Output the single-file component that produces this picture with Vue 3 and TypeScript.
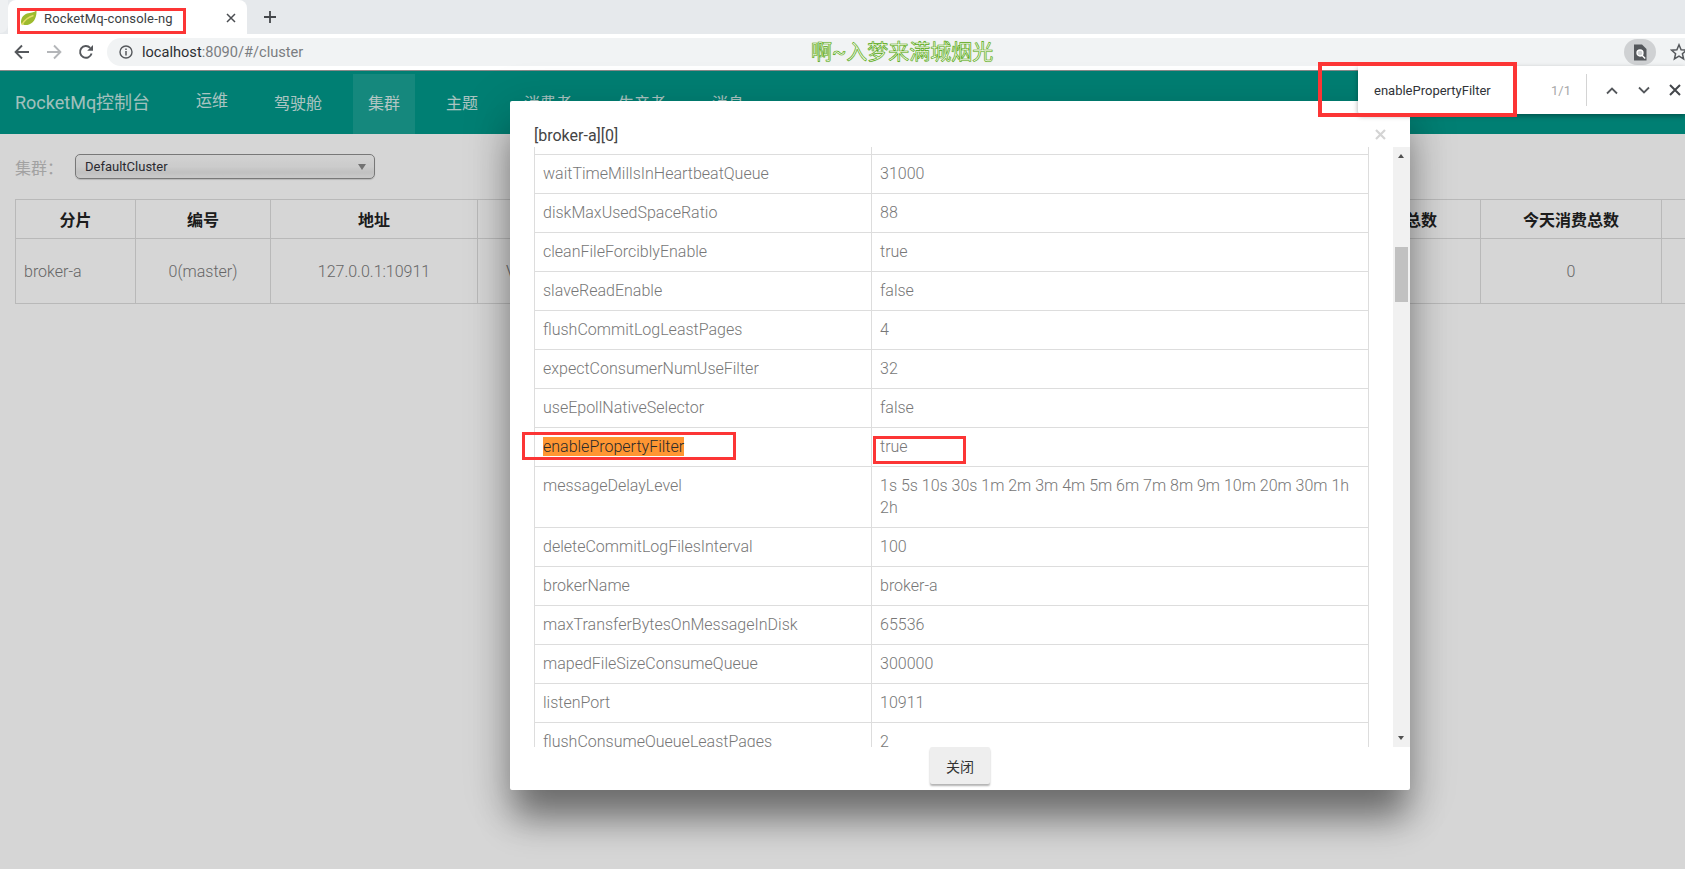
<template>
  <div class="screen">
    <div class="tab-strip">
      <div class="prev-tab"></div>
      <div class="tab">
        <svg class="leaf" width="18" height="16" viewBox="0 0 18 16">
          <path d="M16.5 0.5C16.8 6 14.8 12.5 9 14.5C6 15.5 3 15 1.2 13.5C0.4 9.5 2.5 5 7 3.5C10.5 2.4 14 2.8 16.5 0.5Z" fill="#9dbb2e" />
          <path d="M1.8 14.8C4.5 10 8.5 7 13.5 5.5" fill="none" stroke="#e4dc66" stroke-width="1.4" />
        </svg>
        <span class="tab-title">RocketMq-console-ng</span>
        <svg class="tab-close" width="10" height="10" viewBox="0 0 10 10">
          <path d="M1 1L9 9M9 1L1 9" stroke="#4a4d51" stroke-width="1.5" />
        </svg>
        <span class="mark tab-mark"></span>
      </div>
      <svg class="new-tab" width="12" height="12" viewBox="0 0 12 12">
        <path d="M6 0V12M0 6H12" stroke="#44474b" stroke-width="1.8" />
      </svg>
    </div>

    <div class="toolbar">
      <svg class="tool" width="16" height="16" viewBox="0 0 16 16">
        <path d="M15 8H2M8 1.5L1.6 8L8 14.5" fill="none" stroke="#55585c" stroke-width="1.9" />
      </svg>
      <svg class="tool" width="16" height="16" viewBox="0 0 16 16">
        <path d="M1 8H14M8 1.5L14.4 8L8 14.5" fill="none" stroke="#b4b6b9" stroke-width="1.9" />
      </svg>
      <svg class="tool" width="16" height="16" viewBox="0 0 16 16">
        <path d="M13.6 9.6A5.9 5.9 0 1 1 12.2 3.8" fill="none" stroke="#55585c" stroke-width="1.9" />
        <path d="M15 1V6.8H9.2Z" fill="#55585c" />
      </svg>
      <div class="omnibox">
        <svg width="14" height="14" viewBox="0 0 14 14">
          <circle cx="7" cy="7" r="6" fill="none" stroke="#55585c" stroke-width="1.4" />
          <path d="M7 6V10.4M7 3.4V5" stroke="#55585c" stroke-width="1.5" />
        </svg>
        <span class="url"><span class="host">localhost</span>:8090/#/cluster</span>
        <span class="badge">
          <svg width="14" height="17" viewBox="0 0 14 17">
            <path d="M1 0.5H9L13.5 5V16.5H1Z" fill="#55585c" />
            <circle cx="7" cy="9" r="3" fill="#cfd1d3" stroke="#fff" stroke-width="1.3" />
            <path d="M9 11.2L12.2 14.4" stroke="#fff" stroke-width="1.4" />
          </svg>
        </span>
        <svg class="star" width="18" height="18" viewBox="0 0 18 18">
          <path d="M9 1.8L11.1 6.7L16.4 7.2L12.4 10.7L13.6 15.9L9 13.2L4.4 15.9L5.6 10.7L1.6 7.2L6.9 6.7Z" fill="none" stroke="#55585c" stroke-width="1.5" />
        </svg>
      </div>
      <span class="watermark">啊~入梦来满城烟光</span>
    </div>

    <div class="page">
      <nav class="navbar">
        <span class="brand">RocketMq控制台</span>
        <a
          v-for="item in navItems"
          :key="item"
          class="nav-item"
          :class="{ active: item === '集群', raised: item === '运维' }"
        >{{ item }}</a>
      </nav>

      <div class="content">
        <div class="filter">
          <span class="filter-label">集群：</span>
          <div class="select">
            <span>DefaultCluster</span>
            <i class="select-arrow"></i>
          </div>
        </div>
        <table class="cluster-table">
          <colgroup>
            <col v-for="col in clusterCols" :key="col.title" :style="{ width: col.width + 'px' }" />
          </colgroup>
          <thead>
            <tr><th v-for="col in clusterCols" :key="col.title">{{ col.title }}</th></tr>
          </thead>
          <tbody>
            <tr>
              <td v-for="(col, i) in clusterCols" :key="col.title" :class="{ left: i === 0 }">{{ col.value }}</td>
            </tr>
          </tbody>
        </table>
      </div>

      <div class="overlay">
        <div class="modal">
          <div class="modal-head">
            <span class="modal-title">[broker-a][0]</span>
            <svg class="modal-close" width="11" height="11" viewBox="0 0 11 11">
              <path d="M1 1L10 10M10 1L1 10" stroke="#d4d4d4" stroke-width="2.2" />
            </svg>
          </div>
          <div class="modal-body">
            <div class="table-scroll">
              <table class="detail-table">
                <colgroup>
                  <col class="key-col" />
                  <col />
                </colgroup>
                <tbody>
                  <tr class="cut-row"><td></td><td></td></tr>
                  <tr v-for="row in brokerConfig" :key="row.key">
                    <td>
                      <template v-if="row.key === 'enablePropertyFilter'">
                        <span class="hit">{{ row.key }}</span>
                        <span class="mark key-mark"></span>
                      </template>
                      <template v-else>{{ row.key }}</template>
                    </td>
                    <td>
                      {{ row.value }}
                      <span v-if="row.key === 'enablePropertyFilter'" class="mark val-mark"></span>
                    </td>
                  </tr>
                </tbody>
              </table>
            </div>
            <div class="scrollbar">
              <i class="arrow-up"></i>
              <i class="thumb"></i>
              <i class="arrow-down"></i>
            </div>
          </div>
          <div class="modal-foot">
            <button class="close-btn">关闭</button>
          </div>
        </div>
      </div>
    </div>

    <div class="findbar">
      <span class="find-text">enablePropertyFilter</span>
      <span class="find-count">1/1</span>
      <span class="find-sep"></span>
      <svg width="14" height="9" viewBox="0 0 14 9">
        <path d="M2 7.5L7 2.5L12 7.5" fill="none" stroke="#55585c" stroke-width="1.8" />
      </svg>
      <svg width="14" height="9" viewBox="0 0 14 9">
        <path d="M2 1.5L7 6.5L12 1.5" fill="none" stroke="#55585c" stroke-width="1.8" />
      </svg>
      <svg width="12" height="12" viewBox="0 0 12 12">
        <path d="M1 1L11 11M11 1L1 11" stroke="#44474b" stroke-width="2" />
      </svg>
    </div>
    <span class="mark find-mark"></span>
  </div>
</template>

<script setup lang="ts">
  const navItems: string[] = ["运维", "驾驶舱", "集群", "主题", "消费者", "生产者", "消息"];

  const clusterCols = [
    { title: "分片", width: 120, value: "broker-a" },
    { title: "编号", width: 135, value: "0(master)" },
    { title: "地址", width: 207, value: "127.0.0.1:10911" },
    { title: "版本", width: 196, value: "V4_3_0_SNAPSHOT" },
    { title: "生产消息TPS", width: 122, value: "0.00" },
    { title: "消费消息TPS", width: 122, value: "0.00" },
    { title: "昨日生产总数", width: 190, value: "0" },
    { title: "昨日消费总数", width: 190, value: "0" },
    { title: "今天生产总数", width: 183, value: "0" },
    { title: "今天消费总数", width: 181, value: "0" },
    { title: "操作", width: 200, value: "" },
  ];

  const brokerConfig: { key: string; value: string }[] = [
    { key: "waitTimeMillsInHeartbeatQueue", value: "31000" },
    { key: "diskMaxUsedSpaceRatio", value: "88" },
    { key: "cleanFileForciblyEnable", value: "true" },
    { key: "slaveReadEnable", value: "false" },
    { key: "flushCommitLogLeastPages", value: "4" },
    { key: "expectConsumerNumUseFilter", value: "32" },
    { key: "useEpollNativeSelector", value: "false" },
    { key: "enablePropertyFilter", value: "true" },
    { key: "messageDelayLevel", value: "1s 5s 10s 30s 1m 2m 3m 4m 5m 6m 7m 8m 9m 10m 20m 30m 1h 2h" },
    { key: "deleteCommitLogFilesInterval", value: "100" },
    { key: "brokerName", value: "broker-a" },
    { key: "maxTransferBytesOnMessageInDisk", value: "65536" },
    { key: "mapedFileSizeConsumeQueue", value: "300000" },
    { key: "listenPort", value: "10911" },
    { key: "flushConsumeQueueLeastPages", value: "2" },
  ];
</script>

<style scoped>
  .screen {
    position: relative;
    width: 1685px;
    height: 869px;
    overflow: hidden;
    display: flex;
    flex-direction: column;
    background: #fff;
    font-family: Roboto, "Noto Sans CJK SC", sans-serif;
  }

  /* browser chrome */
  .tab-strip {
    height: 34px;
    flex: none;
    display: flex;
    align-items: flex-start;
    background: #e6e9ec;
  }

  .prev-tab {
    width: 8px;
    height: 33px;
    background: #eef0f2;
    border-radius: 0 0 8px 0;
  }

  .tab {
    position: relative;
    width: 239px;
    height: 34px;
    display: flex;
    align-items: center;
    background: #fff;
    border-radius: 8px 8px 0 0;
    padding: 2px 0 0 12px;
    box-sizing: border-box;
  }

  .leaf {
    flex: none;
  }

  .tab-title {
    margin-left: 6px;
    font-size: 13px;
    letter-spacing: 0.15px;
    color: #3c4043;
    white-space: nowrap;
  }

  .tab-close {
    margin-left: 53px;
  }

  .new-tab {
    margin: 11px 0 0 17px;
  }

  .mark {
    position: absolute;
    box-sizing: border-box;
    border: 3px solid #fc3535;
    pointer-events: none;
  }

  .tab-mark {
    left: 9px;
    top: 8px;
    width: 169px;
    height: 26px;
  }

  .toolbar {
    position: relative;
    height: 36px;
    flex: none;
    display: flex;
    align-items: center;
    padding-left: 14px;
    background: #fff;
    box-sizing: border-box;
  }

  .tool {
    flex: none;
    margin-right: 16px;
  }

  .omnibox {
    flex: 1;
    height: 28px;
    margin-left: -3px;
    display: flex;
    align-items: center;
    padding-left: 12px;
    background: #f1f3f4;
    border-radius: 14px 0 0 14px;
  }

  .url {
    margin-left: 9px;
    font-size: 14.6px;
    color: #7a7d81;
    white-space: nowrap;
  }

  .host {
    color: #2c2f33;
  }

  .badge {
    margin-left: auto;
    width: 32px;
    height: 26px;
    display: flex;
    align-items: center;
    justify-content: center;
    background: #cfd1d3;
    border-radius: 13px;
  }

  .star {
    flex: none;
    margin: 0 -3px 0 14px;
  }

  .watermark {
    position: absolute;
    left: 811px;
    top: 4px;
    font-size: 21px;
    line-height: 28px;
    color: #f6fbee;
    -webkit-text-stroke: 0.6px #58a814;
    text-shadow: 0 0 1px #8ccc4e;
    white-space: nowrap;
  }

  /* page under the modal */
  .page {
    position: relative;
    flex: 1;
    border-top: 1px solid #8a8a8a;
    min-height: 0;
  }

  .navbar {
    height: 63px;
    display: flex;
    align-items: flex-end;
    padding-left: 15px;
    background: #009889;
    box-sizing: border-box;
  }

  .brand {
    width: 166px;
    align-self: center;
    margin-top: -4px;
    font-size: 18px;
    color: #fff;
    opacity: 0.75;
    white-space: nowrap;
  }

  .nav-item {
    height: 60px;
    padding: 0 15px;
    margin-right: 16px;
    line-height: 60px;
    font-size: 16px;
    color: #fff;
    opacity: 0.8;
    white-space: nowrap;
  }

  .nav-item.raised {
    line-height: 54px;
  }

  .nav-item.active {
    background: rgba(255, 255, 255, 0.1);
    opacity: 1;
    color: #d7ece9;
  }

  .content {
    padding: 20px 0 0 15px;
  }

  .filter {
    height: 25px;
    display: flex;
    align-items: center;
  }

  .filter-label {
    width: 60px;
    font-size: 16px;
    color: #c2c2c2;
  }

  .select {
    width: 300px;
    height: 25px;
    box-sizing: border-box;
    display: flex;
    align-items: center;
    justify-content: space-between;
    padding: 0 9px;
    font-size: 13px;
    color: #33333a;
    border: 1px solid #8f8f8f;
    border-radius: 5px;
    background: linear-gradient(#fbfbfb, #f3f3f3 50%, #e6e6e6 75%, #f0f0f0);
    box-shadow: 0 1px 1px rgba(0, 0, 0, 0.15);
  }

  .select-arrow {
    width: 0;
    height: 0;
    margin-right: -1px;
    border-left: 4px solid transparent;
    border-right: 4px solid transparent;
    border-top: 6px solid #888;
  }

  .cluster-table {
    margin-top: 20px;
    table-layout: fixed;
    width: 1846px;
    border-collapse: collapse;
    color: #7a7a7a;
  }

  .cluster-table th,
  .cluster-table td {
    border: 1px solid #ddd;
    padding: 0 8px;
    text-align: center;
    overflow: hidden;
    white-space: nowrap;
  }

  .cluster-table th {
    height: 38px;
    font-size: 16px;
    font-weight: 700;
    color: #222;
  }

  .cluster-table td {
    height: 64px;
    font-size: 16px;
    font-weight: 300;
  }

  .cluster-table td.left {
    text-align: left;
  }

  /* modal */
  .overlay {
    position: absolute;
    inset: 0;
    background: rgba(0, 0, 0, 0.16);
  }

  .modal {
    width: 900px;
    height: 689px;
    margin: 30px 0 0 510px;
    display: flex;
    flex-direction: column;
    background: #fff;
    border-radius: 2px;
    box-shadow: 0 32px 34px -4px rgba(0, 0, 0, 0.44), 0 9px 46px 8px rgba(0, 0, 0, 0.12);
  }

  .modal-head {
    position: relative;
    height: 46px;
    flex: none;
    display: flex;
    align-items: center;
    padding: 23px 0 0 24px;
    box-sizing: border-box;
    font-size: 16px;
    color: #444;
  }

  .modal-close {
    position: absolute;
    left: 865px;
    top: 28px;
  }

  .modal-body {
    height: 600px;
    flex: none;
    display: flex;
    overflow: hidden;
  }

  .table-scroll {
    flex: 1;
    padding-left: 24px;
  }

  .detail-table {
    width: 835px;
    table-layout: fixed;
    border-collapse: collapse;
    font-size: 16px;
    line-height: 22px;
    font-weight: 300;
    color: #777;
  }

  .key-col {
    width: 337px;
  }

  .detail-table td {
    position: relative;
    border: 1px solid #ddd;
    padding: 8px;
    vertical-align: top;
  }

  .detail-table .cut-row td {
    height: 7px;
    padding: 0;
    border-top: none;
  }

  .hit {
    background: #ff9632;
    color: #2a2a2a;
  }

  .key-mark {
    left: -13px;
    top: 4px;
    width: 214px;
    height: 28px;
  }

  .val-mark {
    left: 1px;
    top: 8px;
    width: 93px;
    height: 28px;
  }

  .scrollbar {
    position: relative;
    width: 17px;
    flex: none;
    background: #f1f1f1;
  }

  .thumb {
    position: absolute;
    left: 2px;
    top: 100px;
    width: 13px;
    height: 55px;
    background: #c1c1c1;
  }

  .arrow-up,
  .arrow-down {
    position: absolute;
    left: 5px;
    width: 0;
    height: 0;
    border-left: 3.5px solid transparent;
    border-right: 3.5px solid transparent;
  }

  .arrow-up {
    top: 7px;
    border-bottom: 4px solid #505050;
  }

  .arrow-down {
    bottom: 7px;
    border-top: 4px solid #505050;
  }

  .modal-foot {
    flex: 1;
    display: flex;
    justify-content: center;
    align-items: flex-start;
  }

  .close-btn {
    width: 60px;
    height: 37px;
    padding: 0;
    border: none;
    border-radius: 2px;
    background: #eee;
    font: 14px Roboto, "Noto Sans CJK SC", sans-serif;
    color: #333;
    box-shadow: 0 2px 2px rgba(0, 0, 0, 0.3);
  }

  /* find in page */
  .findbar {
    position: absolute;
    left: 1358px;
    right: 0;
    top: 66px;
    height: 48px;
    display: flex;
    align-items: center;
    background: #fff;
    border-radius: 0 0 0 3px;
    box-shadow: 0 2px 5px rgba(0, 0, 0, 0.35);
  }

  .find-text {
    flex: none;
    margin-left: 16px;
    width: 177px;
    font-size: 13px;
    color: #303338;
  }

  .find-count {
    flex: none;
    width: 35px;
    font-size: 13px;
    color: #a8a8a8;
  }

  .find-sep {
    flex: none;
    width: 1px;
    height: 32px;
    background: #d4d4d4;
    margin-right: 18px;
  }

  .findbar svg {
    margin-right: 18px;
    flex: none;
  }

  .find-mark {
    left: 1318px;
    top: 62px;
    width: 199px;
    height: 55px;
    border-width: 4px;
  }
</style>

<style>
  html,
  body {
    margin: 0;
    overflow: hidden;
  }
</style>
